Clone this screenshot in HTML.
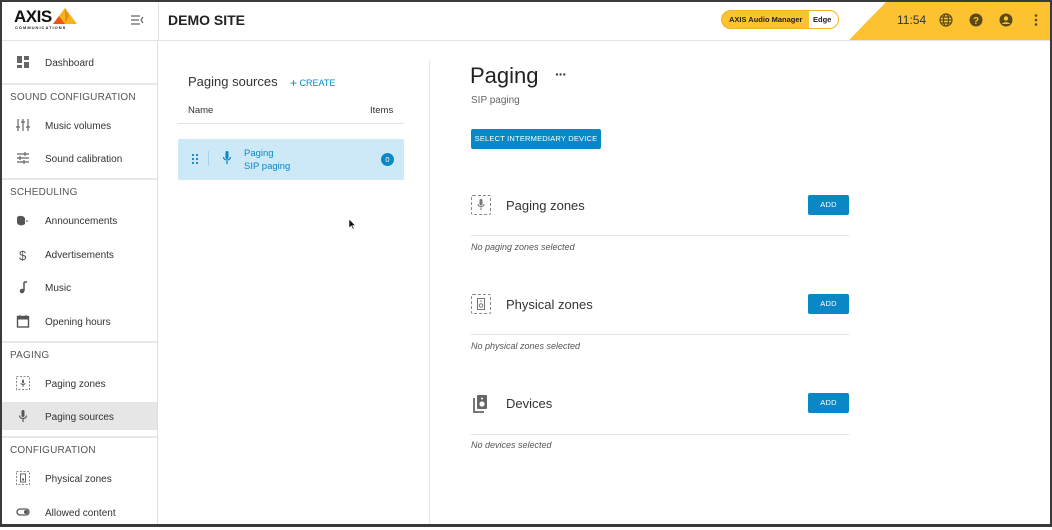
<!DOCTYPE html>
<html><head><meta charset="utf-8"><style>
*{box-sizing:border-box;margin:0;padding:0}
body{width:1052px;height:527px;overflow:hidden;font-family:"Liberation Sans",sans-serif;color:#333;background:#fff;position:relative}
.frame{position:absolute;inset:0;border:2px solid #3a3a3a;border-bottom-width:3px;pointer-events:none;z-index:10}
.abs{position:absolute}
.hdr{position:absolute;left:0;top:0;width:1052px;height:41px;border-bottom:1px solid #e2e2e2}
.side{position:absolute;left:0;top:41px;width:158px;height:486px;border-right:1px solid #e0e0e0}
.sep{position:absolute;left:0;width:157px;height:2px;background:#e8e8e8}
.sec{position:absolute;left:10px;font-size:10px;color:#555;letter-spacing:.2px}
.item{position:absolute;left:0;width:157px;height:28px;font-size:10px;color:#333;line-height:32px;padding-left:45px}
.ic{position:absolute;left:16px;top:7px;width:14px;height:14px}
.btn{position:absolute;background:#0a88c6;color:#fff;font-size:7.5px;text-align:center;border-radius:2px;letter-spacing:.2px}
.h2{position:absolute;font-size:13px;color:#333}
.line{position:absolute;height:1px;background:#e2e2e2}
.it{position:absolute;font-size:9px;font-style:italic;color:#555}
.dash{position:absolute;width:20px;height:20px;border:1px dashed #888;border-radius:2px}
</style></head><body>
<div class="hdr">
 <div class="abs" style="left:14px;top:7px;font-weight:bold;font-size:17px;letter-spacing:-.5px;color:#111">AXIS</div>
 <svg class="abs" style="left:52px;top:7px" width="26" height="18"><polygon points="13,1 25,17 1,17" fill="#f5b418"/><polygon points="13,1 7,9 13,17 1,17" fill="#e84a1a" opacity=".9"/><polygon points="13,1 17,9 13,17" fill="#f08a1c"/></svg>
 <div class="abs" style="left:15px;top:25px;font-size:4px;font-weight:bold;letter-spacing:1px;color:#222">COMMUNICATIONS</div>
 <svg class="abs" style="left:131px;top:15px" width="13" height="10"><path d="M0 1h9M0 5h8M0 9h9M12 2l-2 3 2 3" stroke="#666" stroke-width="1.2" fill="none"/></svg>
 <div class="abs" style="left:158px;top:0;width:1px;height:41px;background:#e2e2e2"></div>
 <div class="abs" style="left:168px;top:12px;font-size:14px;font-weight:bold;color:#222">DEMO SITE</div>
 <svg class="abs" style="left:849px;top:0" width="203" height="40"><polygon points="39,0 203,0 203,40 0,40" fill="#fdc230"/></svg>
 <div class="abs" style="left:721px;top:10px;width:118px;height:19px;border-radius:10px;background:#fdc230;border:1px solid #f0b520"></div>
 <div class="abs" style="left:729px;top:15px;font-size:7.5px;font-weight:bold;color:#222">AXIS Audio Manager</div>
 <div class="abs" style="left:809px;top:11px;width:29px;height:17px;border-radius:0 9px 9px 0;background:#fff"></div>
 <div class="abs" style="left:813px;top:15px;font-size:7.5px;font-weight:bold;color:#222">Edge</div>
 <div class="abs" style="left:897px;top:13px;font-size:12px;color:#333">11:54</div>
 <svg class="abs" style="left:939px;top:13px" width="14" height="14"><g fill="none" stroke="#5a4a1a" stroke-width="1.2"><circle cx="7" cy="7" r="6"/><ellipse cx="7" cy="7" rx="2.6" ry="6"/><path d="M1 7h12M2 4h10M2 10h10"/></g></svg>
 <svg class="abs" style="left:969px;top:13px" width="14" height="14"><circle cx="7" cy="7" r="6.5" fill="#5a4a1a"/><text x="7" y="11" font-size="10" font-weight="bold" fill="#fdc230" text-anchor="middle" font-family="Liberation Sans">?</text></svg>
 <svg class="abs" style="left:999px;top:13px" width="14" height="14"><circle cx="7" cy="7" r="6.5" fill="#5a4a1a"/><circle cx="7" cy="5.5" r="2.2" fill="#fdc230"/><path d="M3 11c1.5-2.5 6.5-2.5 8 0" fill="#fdc230"/></svg>
 <svg class="abs" style="left:1034px;top:13px" width="4" height="14"><circle cx="2" cy="2.5" r="1.3" fill="#5a4a1a"/><circle cx="2" cy="7" r="1.3" fill="#5a4a1a"/><circle cx="2" cy="11.5" r="1.3" fill="#5a4a1a"/></svg>
</div>

<div class="side">
 <div class="item" style="top:7px"><svg class="ic" viewBox="0 0 14 14"><path fill="#666" d="M1 1h5v7H1zM8 1h5v4H8zM8 7h5v6H8zM1 10h5v3H1z"/></svg>Dashboard</div>
 <div class="sep" style="top:42px"></div>
 <div class="sec" style="top:51px">SOUND CONFIGURATION</div>
 <div class="item" style="top:70px"><svg class="ic" viewBox="0 0 14 14"><path stroke="#666" stroke-width="1.2" d="M2 1v12M7 1v12M12 1v12M0 9h4M5 4h4M10 9h4"/></svg>Music volumes</div>
 <div class="item" style="top:103px"><svg class="ic" viewBox="0 0 14 14"><path stroke="#666" stroke-width="1.2" d="M1 3h12M1 7h12M1 11h12M9 1v4M4 5v4M8 9v4"/></svg>Sound calibration</div>
 <div class="sep" style="top:137px"></div>
 <div class="sec" style="top:146px">SCHEDULING</div>
 <div class="item" style="top:165px"><svg class="ic" viewBox="0 0 14 14"><path fill="#555" d="M1 5c0-3 8-3 8 1v5c-2 2-8 2-8-2z"/><circle cx="11" cy="8" r="1" fill="#888"/></svg>Announcements</div>
 <div class="item" style="top:199px"><span class="abs" style="left:19px;top:0;font-size:13px;color:#555">$</span>Advertisements</div>
 <div class="item" style="top:232px"><svg class="ic" viewBox="0 0 14 14"><path stroke="#555" stroke-width="1.5" d="M8 2v9M8 2h3"/><circle cx="6" cy="11" r="2.3" fill="#555"/></svg>Music</div>
 <div class="item" style="top:266px"><svg class="ic" viewBox="0 0 14 14"><rect x="1.5" y="2.5" width="11" height="10.5" fill="none" stroke="#555" stroke-width="1.4"/><path d="M1.5 3h11v2.5h-11z" fill="#555"/><path d="M4 1v2M10 1v2" stroke="#555"/></svg>Opening hours</div>
 <div class="sep" style="top:300px"></div>
 <div class="sec" style="top:309px">PAGING</div>
 <div class="item" style="top:328px"><svg class="ic" viewBox="0 0 14 14"><rect x=".5" y=".5" width="13" height="13" fill="none" stroke="#888" stroke-dasharray="2 1.5"/><rect x="6" y="3.5" width="2" height="4" rx="1" fill="#666"/><path d="M5 7c0 2 4 2 4 0M7 9v2" stroke="#666" fill="none"/></svg>Paging zones</div>
 <div class="item" style="top:361px;background:#e6e6e6;border-left:2px solid #f5b418;padding-left:43px"><svg class="ic" style="left:14px" viewBox="0 0 14 14"><rect x="5.5" y="1" width="3" height="7" rx="1.5" fill="#555"/><path d="M3.5 6.5c0 4 7 4 7 0M7 10v3" stroke="#555" stroke-width="1.2" fill="none"/></svg>Paging sources</div>
 <div class="sep" style="top:395px"></div>
 <div class="sec" style="top:404px">CONFIGURATION</div>
 <div class="item" style="top:423px"><svg class="ic" viewBox="0 0 14 14"><rect x=".5" y=".5" width="13" height="13" fill="none" stroke="#888" stroke-dasharray="2 1.5"/><rect x="4.5" y="3" width="5" height="8" fill="none" stroke="#666"/><circle cx="7" cy="8.5" r="1.2" fill="#666"/></svg>Physical zones</div>
 <div class="item" style="top:457px"><svg class="ic" viewBox="0 0 14 14"><rect x="1" y="4" width="12" height="6" rx="3" fill="none" stroke="#555" stroke-width="1.3"/><circle cx="10" cy="7" r="2" fill="#555"/></svg>Allowed content</div>
</div>

<div class="abs" style="left:188px;top:74px;font-size:13px;color:#333">Paging sources</div>
<div class="abs" style="left:290px;top:75px;font-size:9px;color:#0a88c6"><b style="font-size:12px;font-weight:normal;position:relative;top:1px">+</b> CREATE</div>
<div class="abs" style="left:188px;top:105px;font-size:9.5px;color:#333">Name</div>
<div class="abs" style="left:370px;top:105px;font-size:9.5px;color:#333">Items</div>
<div class="line" style="left:178px;top:123px;width:226px"></div>
<div class="abs" style="left:178px;top:139px;width:226px;height:41px;background:#cde9f8;border-radius:2px"></div>
<svg class="abs" style="left:192px;top:154px" width="6" height="10"><g fill="#0a88c6"><circle cx="1" cy="1" r="1.1"/><circle cx="5" cy="1" r="1.1"/><circle cx="1" cy="5" r="1.1"/><circle cx="5" cy="5" r="1.1"/><circle cx="1" cy="9" r="1.1"/><circle cx="5" cy="9" r="1.1"/></g></svg>
<div class="abs" style="left:208px;top:151px;width:1px;height:15px;background:#a8d0e6"></div>
<svg class="abs" style="left:221px;top:151px" width="12" height="14"><rect x="4.5" y="0" width="3" height="8" rx="1.5" fill="#0a88c6"/><path d="M2.5 6c0 4 7 4 7 0M6 10v3" stroke="#0a88c6" stroke-width="1.3" fill="none"/></svg>
<div class="abs" style="left:244px;top:148px;font-size:9.5px;color:#0a88c6;line-height:12.5px">Paging<br>SIP paging</div>
<div class="abs" style="left:381px;top:153px;width:13px;height:13px;border-radius:50%;background:#0a88c6;color:#fff;font-size:7.5px;text-align:center;line-height:13px">0</div>
<svg class="abs" style="left:348px;top:218px" width="8" height="12"><path d="M1 1v9l2.3-2 1.6 3.4 1.2-.6L4.6 7.5H7.5z" fill="#111" stroke="#fff" stroke-width=".6"/></svg>

<div class="abs" style="left:429px;top:60px;width:1px;height:467px;background:#e6e6e6"></div>
<div class="abs" style="left:470px;top:63px;font-size:22px;color:#222">Paging</div>
<div class="abs" style="left:555px;top:66px;font-size:14px;font-weight:bold;color:#333;letter-spacing:-1px">···</div>
<div class="abs" style="left:471px;top:95px;font-size:10px;color:#666">SIP paging</div>
<div class="btn" style="left:471px;top:129px;width:130px;height:20px;line-height:20px">SELECT INTERMEDIARY DEVICE</div>

<div class="dash" style="left:471px;top:195px"></div>
<svg class="abs" style="left:476px;top:199px" width="10" height="12"><rect x="3.5" y="0" width="3" height="6.5" rx="1.5" fill="#777"/><path d="M2 5c0 3.5 6 3.5 6 0M5 8.5v2.5" stroke="#777" fill="none"/></svg>
<div class="h2" style="left:506px;top:198px">Paging zones</div>
<div class="btn" style="left:808px;top:195px;width:41px;height:20px;line-height:20px">ADD</div>
<div class="line" style="left:471px;top:235px;width:378px"></div>
<div class="it" style="left:471px;top:242px">No paging zones selected</div>

<div class="dash" style="left:471px;top:294px"></div>
<svg class="abs" style="left:477px;top:298px" width="8" height="12"><rect x=".5" y=".5" width="7" height="11" fill="none" stroke="#777"/><circle cx="4" cy="7.5" r="1.8" fill="none" stroke="#777"/><circle cx="4" cy="3" r=".8" fill="#777"/></svg>
<div class="h2" style="left:506px;top:297px">Physical zones</div>
<div class="btn" style="left:808px;top:294px;width:41px;height:20px;line-height:20px">ADD</div>
<div class="line" style="left:471px;top:334px;width:378px"></div>
<div class="it" style="left:471px;top:341px">No physical zones selected</div>

<svg class="abs" style="left:473px;top:394px" width="16" height="19"><path d="M1 4v14h10" stroke="#666" stroke-width="1.8" fill="none"/><rect x="4" y="1" width="10" height="14" rx="1" fill="#666"/><circle cx="9" cy="10" r="2.6" fill="#fff"/><circle cx="9" cy="4.5" r="1" fill="#fff"/></svg>
<div class="h2" style="left:506px;top:396px">Devices</div>
<div class="btn" style="left:808px;top:393px;width:41px;height:20px;line-height:20px">ADD</div>
<div class="line" style="left:471px;top:434px;width:378px"></div>
<div class="it" style="left:471px;top:440px">No devices selected</div>

<div class="frame"></div>
</body></html>
